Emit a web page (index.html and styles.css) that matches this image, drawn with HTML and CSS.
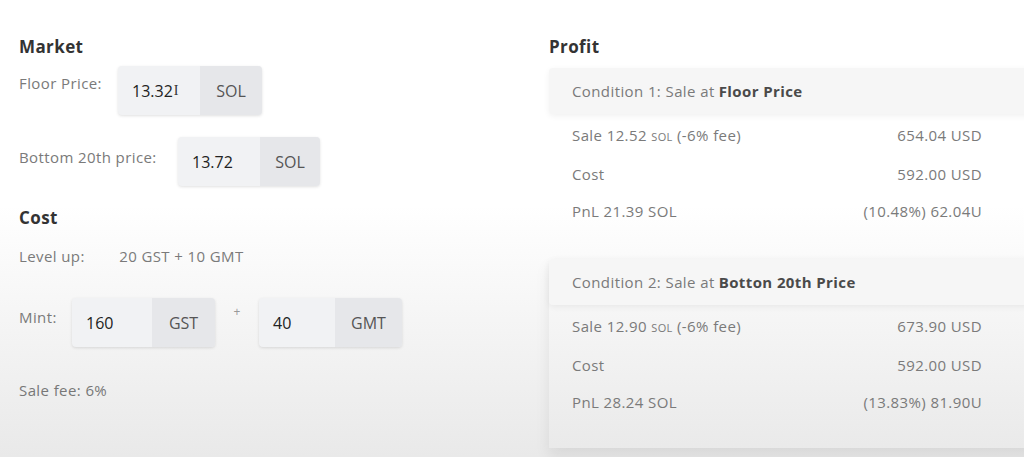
FILE: index.html
```html
<!DOCTYPE html>
<html lang="en">
<head>
    <meta charset="UTF-8">
    <meta name="viewport" content="width=device-width, initial-scale=1.0">
    <title>NFT Profit Calculator</title>
    <link rel="stylesheet" href="styles.css">
</head>
<body>
    <div class="page">
        <div class="left">
            <h3>Market</h3>
            <div class="field floor">
                <span class="label">Floor Price:</span>
                <div class="input-group">
                    <span class="value">13.32<span class="caret">I</span></span>
                    <span class="unit">SOL</span>
                </div>
            </div>
            <div class="field bottom20">
                <span class="label">Bottom 20th price:</span>
                <div class="input-group">
                    <span class="value">13.72</span>
                    <span class="unit">SOL</span>
                </div>
            </div>

            <h3 class="cost-title">Cost</h3>
            <div class="level-up">
                <span class="label">Level up:</span>
                <span class="level-value">20 GST + 10 GMT</span>
            </div>
            <div class="field mint">
                <span class="label">Mint:</span>
                <div class="input-group">
                    <span class="value">160</span>
                    <span class="unit">GST</span>
                </div>
                <span class="plus">+</span>
                <div class="input-group">
                    <span class="value">40</span>
                    <span class="unit">GMT</span>
                </div>
            </div>
            <p class="sale-fee">Sale fee: 6%</p>
        </div>

        <div class="right">
            <h3>Profit</h3>
            <div class="card">
                <div class="card-head">Condition 1: Sale at <strong>Floor Price</strong></div>
                <div class="row"><span>Sale 12.52 <small>SOL</small> (-6% fee)</span><span>654.04 USD</span></div>
                <div class="row"><span>Cost</span><span>592.00 USD</span></div>
                <div class="row"><span>PnL 21.39 SOL</span><span>(10.48%) 62.04U</span></div>
            </div>
            <div class="card second">
                <div class="card-head">Condition 2: Sale at <strong>Botton 20th Price</strong></div>
                <div class="row"><span>Sale 12.90 <small>SOL</small> (-6% fee)</span><span>673.90 USD</span></div>
                <div class="row"><span>Cost</span><span>592.00 USD</span></div>
                <div class="row"><span>PnL 28.24 SOL</span><span>(13.83%) 81.90U</span></div>
            </div>
        </div>
    </div>
</body>
</html>
```

FILE: styles.css
```css
html, body {
    margin: 0;
    padding: 0;
    height: 100%;
    overflow: hidden;
}
body {
    font-family: "Open Sans", Arial, sans-serif;
    color: #777;
    background: linear-gradient(to bottom, #ffffff 0%, #ffffff 45%, #e9e9e9 100%);
}
.page {
    display: flex;
    padding: 36px 0 0 19px;
}
h3 {
    margin: 0;
    font-size: 17px;
    font-weight: 700;
    color: #333;
    line-height: 22px;
    letter-spacing: 0.4px;
}
.left {
    width: 530px;
    flex-shrink: 0;
}
.label {
    font-size: 15px;
    letter-spacing: 0.4px;
    color: #7a7a7a;
}
.field {
    display: flex;
    align-items: flex-start;
}
.field .label {
    line-height: 22px;
}
.input-group {
    display: flex;
    height: 49px;
    border-radius: 4px;
    overflow: hidden;
    box-shadow: 0 1px 3px rgba(0, 0, 0, 0.12);
    background-color: #f1f2f4;
}
.input-group .value {
    display: flex;
    align-items: center;
    padding-left: 14px;
    font-size: 16px;
    color: #222;
    width: 68px;
}
.input-group .unit {
    display: flex;
    align-items: center;
    justify-content: center;
    background-color: #e6e7ea;
    font-size: 16px;
    color: #555;
    width: 62px;
}
.caret {
    font-family: "Liberation Serif", serif;
    font-size: 14px;
    margin-left: 1px;
    color: #333;
}
.floor {
    margin-top: 8px;
}
.floor .label {
    width: 99px;
    margin-top: 6px;
}
.floor .value {
    width: 68px;
}
.bottom20 {
    margin-top: 22px;
}
.bottom20 .label {
    width: 159px;
    margin-top: 9px;
}
.bottom20 .value {
    width: 68px;
}
.bottom20 .unit {
    width: 60px;
}
.cost-title {
    margin-top: 21px;
}
.level-up {
    margin-top: 16px;
    line-height: 22px;
}
.level-up .label {
    display: inline-block;
    width: 96px;
}
.level-value {
    font-size: 15px;
    letter-spacing: 0.4px;
    color: #7a7a7a;
}
.mint {
    margin-top: 31px;
}
.mint .label {
    width: 53px;
    margin-top: 8px;
}
.mint .value {
    width: 66px;
}
.mint .unit {
    width: 63px;
}
.mint .input-group + .plus + .input-group .value {
    width: 62px;
}
.mint .input-group + .plus + .input-group .unit {
    width: 67px;
}
.plus {
    width: 44px;
    text-align: center;
    font-size: 12px;
    color: #999;
    margin-top: 5px;
}
.sale-fee {
    margin: 32px 0 0;
    font-size: 15px;
    letter-spacing: 0.4px;
    line-height: 22px;
}
.right {
    width: 520px;
    flex-shrink: 0;
}
.card {
    margin-top: 10px;
}
.card.second {
    margin-top: 37px;
    box-shadow: 0 8px 14px rgba(0, 0, 0, 0.08);
    padding-bottom: 35px;
}
.card-head {
    height: 46px;
    display: flex;
    align-items: center;
    padding-left: 23px;
    font-size: 15px;
    letter-spacing: 0.4px;
    color: #7a7a7a;
    background-color: #f6f6f6;
    box-shadow: 0 2px 6px rgba(0, 0, 0, 0.06);
    border-radius: 4px 0 0 4px;
}
.card-head strong {
    color: #4a4a4a;
    margin-left: 4px;
}
.row {
    display: flex;
    justify-content: space-between;
    width: 410px;
    padding-left: 23px;
    font-size: 15px;
    letter-spacing: 0.4px;
    line-height: 22px;
    margin-top: 10px;
    color: #7a7a7a;
}
.row + .row {
    margin-top: 15px;
}
.row small {
    font-size: 11px;
}
```
